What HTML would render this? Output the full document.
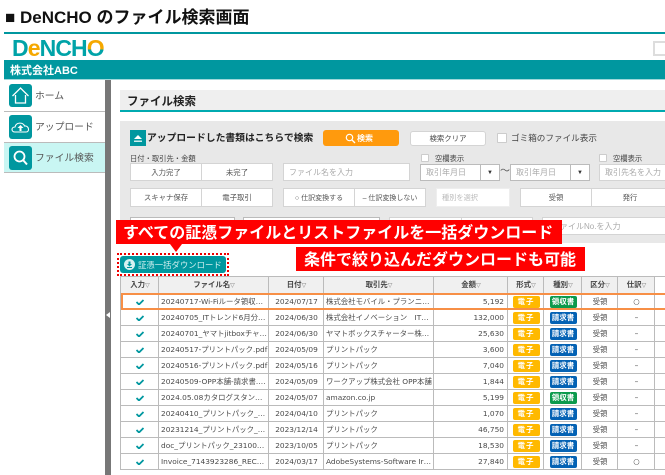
<!DOCTYPE html>
<html lang="ja"><head><meta charset="utf-8"><title>DeNCHO</title>
<style>
html,body{margin:0;padding:0;background:#fff}
#p{position:relative;width:665px;height:475px;overflow:hidden;background:#fff;font-family:"Liberation Sans","Noto Sans CJK JP",sans-serif;color:#555;filter:blur(.25px)}
#p div{position:absolute;box-sizing:border-box}
.t{white-space:nowrap;line-height:1}
.box{background:#fff;border:1px solid #d4d4d4;display:flex;align-items:center;justify-content:center;font-size:7.400px;color:#555;white-space:nowrap;overflow:hidden}
.ph{justify-content:flex-start;padding-left:5px;color:#aaa;font-size:8px}
.cb{background:#fff;border:1px solid #ccc;border-radius:1px}
.ic{background:#00979f;border-radius:3px}
table{position:absolute;left:120px;top:276px;width:545px;border-collapse:collapse;table-layout:fixed;font-family:"DejaVu Sans","Noto Sans CJK JP",sans-serif;font-size:7.400px;color:#4a4a4a}
td,th{border:1px solid #bbb;height:16px;padding:0 1px 0 2px;white-space:nowrap;overflow:hidden;line-height:1;box-sizing:border-box}
th{background:#f0f0f0;font-weight:bold;color:#444;height:17px;text-align:center;font-size:7.400px}
th i{font-style:normal;color:#777;font-size:6px;font-weight:normal}
tr td:nth-child(1),tr td:nth-child(3){text-align:center}
tr td:nth-child(5){text-align:right;padding-right:3px}
tr td:nth-child(6),tr td:nth-child(7),tr td:nth-child(8),tr td:nth-child(9){text-align:center}
td:nth-child(10),th:nth-child(10){background:#fff;border-right:0}
b.e,b.s,b.r{display:block;width:27px;height:12px;margin:0 auto;border-radius:2px;color:#fff;font-weight:bold;font-size:7.500px;line-height:12px;text-align:center}
b.e{background:#ffb900;letter-spacing:1px}
b.s{background:#0b9a4c}
b.r{background:#0462b4}
td svg{display:block;margin:0 auto}
</style></head><body>
<div id="p">
<div class="t" style="left:5px;top:9px;font-size:17px;font-weight:bold;color:#111">■ DeNCHO のファイル検索画面</div>
<div style="left:4px;top:32px;width:661px;height:2px;background:#00979f"></div>

<div class="t" style="left:12px;top:37px;font-size:23px;font-weight:bold;letter-spacing:-.9px;color:#00a3a8">D<span style="color:#f5a800">e</span>NCH<span style="background:linear-gradient(#f5a800 55%,#00a3a8 55%);-webkit-background-clip:text;background-clip:text;color:transparent">O</span></div>
<div style="left:653px;top:41px;width:14px;height:15px;border:2px solid #ddd;background:#fff"></div>

<div style="left:4px;top:60px;width:661px;height:20px;background:#00979f;border-bottom:1px solid #9fd8da"></div>
<div class="t" style="left:10px;top:66px;font-size:11px;font-weight:bold;color:#fff">株式会社ABC</div>

<div style="left:105px;top:80px;width:6px;height:395px;background:#777"></div>
<svg style="position:absolute;left:106px;top:312px" width="4" height="6"><path d="M4 0V6L0 3Z" fill="#fff"/></svg>

<div style="left:4px;top:111px;width:101px;height:1px;background:#bbb"></div>
<div style="left:4px;top:142px;width:101px;height:31px;background:#c9f6f3;border-top:1px solid #bbb;border-bottom:1px solid #bbb"></div>

<div class="ic" style="left:9px;top:84px;width:23px;height:23px"></div>
<svg style="position:absolute;left:9px;top:84px" width="23" height="23"><path d="M3.500 12L11.500 4L19.500 12M6.500 11V19H16.500V11" fill="none" stroke="#fff" stroke-width="1.300"/></svg>
<div class="t" style="left:35px;top:92px;font-size:9.800px">ホーム</div>

<div class="ic" style="left:9px;top:115px;width:23px;height:24px"></div>
<svg style="position:absolute;left:9px;top:115px" width="23" height="24"><path d="M6 17C2 17 2 12 6 12C7 7 14 7 15.500 11C20 10.500 21 17 17 17Z" fill="none" stroke="#fff" stroke-width="1.100"/><path d="M11.500 10L8.500 13H10.500V16H12.500V13H14.500Z" fill="#fff"/></svg>
<div class="t" style="left:35px;top:123px;font-size:9.800px">アップロード</div>

<div class="ic" style="left:9px;top:146px;width:23px;height:24px"></div>
<svg style="position:absolute;left:9px;top:146px" width="23" height="24"><circle cx="10.500" cy="10.500" r="5" fill="none" stroke="#fff" stroke-width="1.800"/><path d="M14 14L18 18.500" stroke="#fff" stroke-width="2"/></svg>
<div class="t" style="left:35px;top:154px;font-size:9.800px">ファイル検索</div>

<div style="left:120px;top:90px;width:545px;height:20px;background:#efefef"></div>
<div style="left:120px;top:110px;width:545px;height:2px;background:#00aab0"></div>
<div class="t" style="left:127px;top:97px;font-size:11.500px;font-weight:bold;color:#222">ファイル検索</div>

<div style="left:120px;top:121px;width:545px;height:122px;background:#e8e8e8"></div>

<div style="left:130px;top:130px;width:16px;height:16px;background:#00979f"></div>
<svg style="position:absolute;left:130px;top:130px" width="16" height="16"><path d="M4 9L8 5L12 9Z" fill="#fff"/><path d="M4 10.500H12V12H4Z" fill="#cfeeee"/></svg>
<div class="t" style="left:147px;top:134px;font-size:9.800px;font-weight:bold;color:#222">アップロードした書類はこちらで検索</div>

<div style="left:323px;top:130px;width:76px;height:16px;background:#ff9a0d;border-radius:3px"></div>
<svg style="position:absolute;left:345px;top:133px" width="11" height="11"><circle cx="4.500" cy="4.500" r="3.200" fill="none" stroke="#fff" stroke-width="1.200"/><path d="M7 7L10 10" stroke="#fff" stroke-width="1.300"/></svg>
<div class="t" style="left:357px;top:135px;font-size:8px;font-weight:bold;color:#fff">検索</div>
<div class="box" style="left:410px;top:131px;width:76px;height:15px;border-radius:3px;color:#444">検索クリア</div>
<div class="cb" style="left:497px;top:133px;width:10px;height:10px"></div>
<div class="t" style="left:511px;top:134px;font-size:8.600px;color:#444">ゴミ箱のファイル表示</div>

<div class="t" style="left:130px;top:155px;font-size:7.300px;color:#444">日付・取引先・金額</div>
<div class="box" style="left:130px;top:163px;width:72px;height:18px">入力完了</div>
<div class="box" style="left:201px;top:163px;width:72px;height:18px">未完了</div>
<div class="box ph" style="left:283px;top:163px;width:127px;height:18px">ファイル名を入力</div>

<div class="cb" style="left:421px;top:154px;width:8px;height:8px"></div>
<div class="t" style="left:435px;top:155px;font-size:7.300px;color:#444">空欄表示</div>
<div class="box ph" style="left:420px;top:164px;width:61px;height:17px;border-color:#bbb">取引年月日</div>
<div class="box" style="left:480px;top:164px;width:20px;height:17px;border-color:#bbb;font-size:6px;color:#333">▼</div>
<div class="t" style="left:500px;top:167px;font-size:10px;color:#555">～</div>
<div class="box ph" style="left:510px;top:164px;width:61px;height:17px;border-color:#bbb">取引年月日</div>
<div class="box" style="left:570px;top:164px;width:20px;height:17px;border-color:#bbb;font-size:6px;color:#333">▼</div>
<div class="cb" style="left:599px;top:154px;width:8px;height:8px"></div>
<div class="t" style="left:613px;top:155px;font-size:7.300px;color:#444">空欄表示</div>
<div class="box ph" style="left:599px;top:164px;width:70px;height:17px">取引先名を入力</div>

<div class="box" style="left:130px;top:188px;width:72px;height:19px">スキャナ保存</div>
<div class="box" style="left:201px;top:188px;width:72px;height:19px">電子取引</div>
<div class="box" style="left:283px;top:188px;width:72px;height:19px;font-size:7px">○ 仕訳変換する</div>
<div class="box" style="left:354px;top:188px;width:72px;height:19px;font-size:7px">– 仕訳変換しない</div>
<div class="box ph" style="left:436px;top:188px;width:74px;height:19px;font-size:7.200px;color:#bbb;border-color:#eee">種別を選択</div>
<div class="box" style="left:520px;top:188px;width:72px;height:19px">受領</div>
<div class="box" style="left:591px;top:188px;width:78px;height:19px">発行</div>

<div class="box" style="left:130px;top:217px;width:105px;height:18px;border-color:#bbb"></div>
<div class="box" style="left:243px;top:217px;width:137px;height:18px;border-color:#bbb"></div>
<div class="box" style="left:389px;top:217px;width:73px;height:18px"></div>
<div class="box" style="left:461px;top:217px;width:72px;height:18px"></div>
<div class="box ph" style="left:542px;top:217px;width:127px;height:18px;padding-left:9px">ファイルNo.を入力</div>

<div style="left:116px;top:220px;width:446px;height:24px;background:#f00"></div>
<svg style="position:absolute;left:170px;top:244px" width="12" height="8"><path d="M0 0H12L6 8Z" fill="#f00"/></svg>
<div class="t" style="left:123px;top:226px;font-size:16px;font-weight:bold;color:#fff">すべての証憑ファイルとリストファイルを一括ダウンロード</div>
<div style="left:296px;top:247px;width:289px;height:24px;background:#f00"></div>
<div class="t" style="left:304px;top:253px;font-size:16px;font-weight:bold;color:#fff">条件で絞り込んだダウンロードも可能</div>

<div style="left:117px;top:253px;width:112px;height:23px;border:2px dotted #e00"></div>
<div style="left:120px;top:256px;width:106px;height:17px;background:#00979f;border-radius:3px"></div>
<svg style="position:absolute;left:124px;top:259px" width="11" height="11"><circle cx="5.500" cy="5.500" r="5.500" fill="#d5f1f1"/><path d="M4.500 2.500H6.500V5H8L5.500 7.500L3 5H4.500Z M3 8H8V9H3Z" fill="#00979f"/></svg>
<div class="t" style="left:138px;top:261px;font-size:8.400px;color:#cdeeee">証憑一括ダウンロード</div>

<svg width="0" height="0" style="position:absolute"><defs><path id="k" d="M.5 3L3 5.500L7.500 1" stroke="#00979f" stroke-width="1.800" fill="none"/></defs></svg>
<table>
<colgroup><col style="width:38px"><col style="width:110px"><col style="width:55px"><col style="width:110px"><col style="width:74px"><col style="width:36px"><col style="width:38px"><col style="width:36px"><col style="width:37px"><col></colgroup>
<tr><th>入力<i>▽</i></th><th>ファイル名<i>▽</i></th><th>日付<i>▽</i></th><th>取引先<i>▽</i></th><th>金額<i>▽</i></th><th>形式<i>▽</i></th><th>種別<i>▽</i></th><th>区分<i>▽</i></th><th>仕訳<i>▽</i></th><th></th></tr>
<tr><td><svg width="8" height="6"><use href="#k"/></svg></td><td>20240717-Wi-Fiルータ領収…</td><td>2024/07/17</td><td>株式会社モバイル・プランニ…</td><td>5,192</td><td><b class="e">電子</b></td><td><b class="s">領収書</b></td><td>受領</td><td>○</td><td></td></tr>
<tr><td><svg width="8" height="6"><use href="#k"/></svg></td><td>20240705_ITトレンド6月分…</td><td>2024/06/30</td><td>株式会社イノベーション　IT…</td><td>132,000</td><td><b class="e">電子</b></td><td><b class="r">請求書</b></td><td>受領</td><td>–</td><td></td></tr>
<tr><td><svg width="8" height="6"><use href="#k"/></svg></td><td>20240701_ヤマトjitboxチャ…</td><td>2024/06/30</td><td>ヤマトボックスチャーター株…</td><td>25,630</td><td><b class="e">電子</b></td><td><b class="r">請求書</b></td><td>受領</td><td>–</td><td></td></tr>
<tr><td><svg width="8" height="6"><use href="#k"/></svg></td><td>20240517-プリントパック.pdf</td><td>2024/05/09</td><td>プリントパック</td><td>3,600</td><td><b class="e">電子</b></td><td><b class="r">請求書</b></td><td>受領</td><td>–</td><td></td></tr>
<tr><td><svg width="8" height="6"><use href="#k"/></svg></td><td>20240516-プリントパック.pdf</td><td>2024/05/16</td><td>プリントパック</td><td>7,040</td><td><b class="e">電子</b></td><td><b class="r">請求書</b></td><td>受領</td><td>–</td><td></td></tr>
<tr><td><svg width="8" height="6"><use href="#k"/></svg></td><td>20240509-OPP本舗-請求書.…</td><td>2024/05/09</td><td>ワークアップ株式会社 OPP本舗</td><td>1,844</td><td><b class="e">電子</b></td><td><b class="r">請求書</b></td><td>受領</td><td>–</td><td></td></tr>
<tr><td><svg width="8" height="6"><use href="#k"/></svg></td><td>2024.05.08カタログスタン…</td><td>2024/05/07</td><td>amazon.co.jp</td><td>5,199</td><td><b class="e">電子</b></td><td><b class="s">領収書</b></td><td>受領</td><td>–</td><td></td></tr>
<tr><td><svg width="8" height="6"><use href="#k"/></svg></td><td>20240410_プリントパック_…</td><td>2024/04/10</td><td>プリントパック</td><td>1,070</td><td><b class="e">電子</b></td><td><b class="r">請求書</b></td><td>受領</td><td>–</td><td></td></tr>
<tr><td><svg width="8" height="6"><use href="#k"/></svg></td><td>20231214_プリントパック_…</td><td>2023/12/14</td><td>プリントパック</td><td>46,750</td><td><b class="e">電子</b></td><td><b class="r">請求書</b></td><td>受領</td><td>–</td><td></td></tr>
<tr><td><svg width="8" height="6"><use href="#k"/></svg></td><td>doc_プリントパック_23100…</td><td>2023/10/05</td><td>プリントパック</td><td>18,530</td><td><b class="e">電子</b></td><td><b class="r">請求書</b></td><td>受領</td><td>–</td><td></td></tr>
<tr><td><svg width="8" height="6"><use href="#k"/></svg></td><td>Invoice_7143923286_REC…</td><td>2024/03/17</td><td>AdobeSystems-Software Ir…</td><td>27,840</td><td><b class="e">電子</b></td><td><b class="r">請求書</b></td><td>受領</td><td>○</td><td></td></tr>
</table>
<div style="left:121px;top:293px;width:544px;height:17px;border:2px solid #f78f46;border-right:0"></div>
</div>
</body></html>
